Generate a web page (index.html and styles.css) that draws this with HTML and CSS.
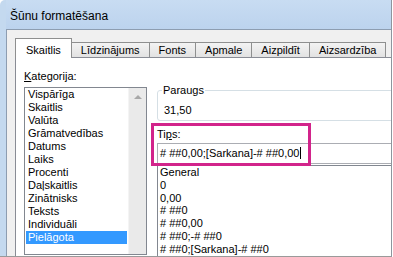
FILE: index.html
```html
<!DOCTYPE html>
<html lang="lv">

<head>
    <meta charset="UTF-8">
    <title>Šūnu formatēšana</title>
    <link rel="stylesheet" href="styles.css">
</head>

<body>
    <div class="window">
        <div class="titlebar">Šūnu formatēšana</div>
        <div class="client">
            <ul class="tabs">
                <li class="tab tab-selected">Skaitlis</li>
                <li class="tab">Līdzinājums</li>
                <li class="tab">Fonts</li>
                <li class="tab">Apmale</li>
                <li class="tab">Aizpildīt</li>
                <li class="tab">Aizsardzība</li>
            </ul>
            <div class="panel">
                <div class="category">
                    <div class="label"><u>K</u>ategorija:</div>
                    <div class="listbox">
                        <ul class="items">
                            <li>Vispārīga</li>
                            <li>Skaitlis</li>
                            <li>Valūta</li>
                            <li>Grāmatvedības</li>
                            <li>Datums</li>
                            <li>Laiks</li>
                            <li>Procenti</li>
                            <li>Daļskaitlis</li>
                            <li>Zinātnisks</li>
                            <li>Teksts</li>
                            <li>Individuāli</li>
                            <li class="item-selected">Pielāgota</li>
                        </ul>
                        <div class="scrollbar"><span class="arrow-up"></span></div>
                    </div>
                </div>
                <div class="format">
                    <fieldset class="sample">
                        <legend>Paraugs</legend>
                        <div class="sample-value">31,50</div>
                    </fieldset>
                    <div class="label">Ti<u>p</u>s:</div>
                    <div class="input">#&nbsp;##0,00;[Sarkana]-#&nbsp;##0,00<span class="caret"></span></div>
                    <ul class="formats">
                        <li>General</li>
                        <li>0</li>
                        <li>0,00</li>
                        <li># ##0</li>
                        <li># ##0,00</li>
                        <li># ##0;-# ##0</li>
                        <li># ##0;[Sarkana]-# ##0</li>
                    </ul>
                    <div class="mark"></div>
                </div>
            </div>
        </div>
    </div>
</body>

</html>
```

FILE: styles.css
```css
* {
    margin: 0;
    padding: 0;
    box-sizing: border-box;
}

body {
    width: 393px;
    height: 257px;
    overflow: hidden;
    background: #ffffff;
    font-family: "Liberation Sans", Arial, sans-serif;
    font-size: 11px;
    color: #000000;
}

.window {
    width: 392px;
    height: 257px;
    padding-left: 6px;
    background: #c4d9ef;
    border-right: 1px solid #8e959e;
    border-bottom: 1px solid #9a9a9a;
    border-top-left-radius: 5px;
    overflow: hidden;
}

.titlebar {
    height: 29px;
    padding: 4px 0 0 4px;
    font-size: 12px;
    line-height: 25px;
    background: linear-gradient(#c8dcf2, #bcd3ee);
}

.client {
    height: 227px;
    padding: 8px 0 0 8px;
    background: #f0f0f0;
    border-left: 1px solid #8d9db1;
    border-top: 1px solid #8d9db1;
    overflow: hidden;
}

/* tabs */
.tabs {
    display: flex;
    align-items: flex-end;
    height: 19px;
    list-style: none;
    position: relative;
    z-index: 1;
}

.tab {
    height: 15px;
    padding: 0 9px;
    margin-right: -1px;
    line-height: 14px;
    background: linear-gradient(#f3f3f3, #e2e2e2);
    border: 1px solid #8e8f8f;
    border-bottom: none;
}

.tab-selected {
    height: 20px;
    margin-bottom: -1px;
    padding: 3px 10px 0;
    line-height: 16px;
    background: #ffffff;
}

.panel {
    display: flex;
    gap: 10px;
    height: 200px;
    padding: 12px 0 0 8px;
    background: #ffffff;
    border-left: 1px solid #898c95;
    border-top: 1px solid #898c95;
    overflow: hidden;
}

.label {
    height: 13px;
    line-height: 13px;
}

/* category list */
.category {
    width: 123px;
    flex-shrink: 0;
}

.category .label {
    margin-bottom: 4px;
}

.listbox {
    display: flex;
    height: 168px;
    border: 1px solid #828790;
}

.items {
    flex: 1;
    padding: 0 1px;
    list-style: none;
}

.items li {
    height: 13px;
    padding-left: 2px;
    line-height: 13px;
}

.items .item-selected {
    background: #3399ff;
    color: #ffffff;
}

.scrollbar {
    width: 18px;
    background: #eaeaea;
    border-left: 1px solid #f4f4f4;
    display: flex;
    justify-content: center;
    padding-top: 7px;
}

.arrow-up {
    width: 0;
    height: 0;
    border-left: 4px solid transparent;
    border-right: 4px solid transparent;
    border-bottom: 4px solid #a8a8a8;
}

/* format side */
.format {
    position: relative;
    width: 260px;
    flex-shrink: 0;
}

.sample {
    margin-top: 14px;
    padding: 0 0 3px 4px;
    border: 1px solid #d5dfe5;
    border-radius: 3px;
}

.sample legend {
    padding: 0 1px;
    line-height: 13px;
}

.sample-value {
    margin-top: 7px;
    padding-left: 2px;
    line-height: 13px;
}

.format .label {
    margin-top: 7px;
    margin-bottom: 2px;
}

.input {
    height: 21px;
    padding: 2px 0 0 2px;
    line-height: 15px;
    border: 1px solid #abadb3;
    white-space: nowrap;
}

.caret {
    display: inline-block;
    width: 1px;
    height: 12px;
    margin-left: 1px;
    vertical-align: -2px;
    background: #000000;
}

.formats {
    margin-top: 1px;
    list-style: none;
    border: 1px solid #828790;
    height: 100px;
}

.formats li {
    height: 12.8px;
    padding-left: 2px;
    line-height: 12.8px;
}

.mark {
    position: absolute;
    left: -6px;
    top: 53px;
    width: 160px;
    height: 43px;
    border: 3px solid #d2248b;
}
```
